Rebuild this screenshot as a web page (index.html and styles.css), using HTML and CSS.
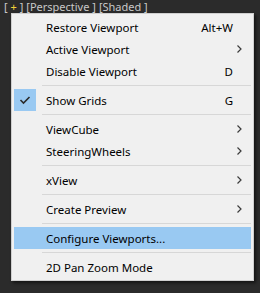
FILE: index.html
```html
<!DOCTYPE html>
<html lang="en">
  <head>
    <meta charset="UTF-8">
    <title>Viewport Menu</title>
    <link rel="stylesheet" href="styles.css">
  </head>
  <body>
    <div class="labels">
      <span>[ <span class="plus">+</span> ]</span>
      <span>[Perspective ]</span>
      <span>[Shaded ]</span>
    </div>

    <div class="menu">
      <div class="item">
        <span class="check"></span>
        <span class="label">Restore Viewport</span>
        <span class="key">Alt+W</span>
        <span class="arrow"></span>
      </div>
      <div class="item">
        <span class="check"></span>
        <span class="label">Active Viewport</span>
        <span class="key"></span>
        <span class="arrow"><svg width="5" height="8" viewBox="0 0 5 8"><path d="M0.5 0.5 L4 4 L0.5 7.5" fill="none" stroke="#3c3c3c" stroke-width="1.2"/></svg></span>
      </div>
      <div class="item">
        <span class="check"></span>
        <span class="label">Disable Viewport</span>
        <span class="key">D</span>
        <span class="arrow"></span>
      </div>
      <div class="sep"></div>
      <div class="item">
        <span class="check on"><svg width="12" height="10" viewBox="0 0 12 10"><path d="M1.5 5 L4.5 8 L10.5 2" fill="none" stroke="#2b2b2b" stroke-width="1.6"/></svg></span>
        <span class="label">Show Grids</span>
        <span class="key">G</span>
        <span class="arrow"></span>
      </div>
      <div class="sep"></div>
      <div class="item">
        <span class="check"></span>
        <span class="label">ViewCube</span>
        <span class="key"></span>
        <span class="arrow"><svg width="5" height="8" viewBox="0 0 5 8"><path d="M0.5 0.5 L4 4 L0.5 7.5" fill="none" stroke="#3c3c3c" stroke-width="1.2"/></svg></span>
      </div>
      <div class="item">
        <span class="check"></span>
        <span class="label">SteeringWheels</span>
        <span class="key"></span>
        <span class="arrow"><svg width="5" height="8" viewBox="0 0 5 8"><path d="M0.5 0.5 L4 4 L0.5 7.5" fill="none" stroke="#3c3c3c" stroke-width="1.2"/></svg></span>
      </div>
      <div class="sep"></div>
      <div class="item">
        <span class="check"></span>
        <span class="label">xView</span>
        <span class="key"></span>
        <span class="arrow"><svg width="5" height="8" viewBox="0 0 5 8"><path d="M0.5 0.5 L4 4 L0.5 7.5" fill="none" stroke="#3c3c3c" stroke-width="1.2"/></svg></span>
      </div>
      <div class="sep"></div>
      <div class="item">
        <span class="check"></span>
        <span class="label">Create Preview</span>
        <span class="key"></span>
        <span class="arrow"><svg width="5" height="8" viewBox="0 0 5 8"><path d="M0.5 0.5 L4 4 L0.5 7.5" fill="none" stroke="#3c3c3c" stroke-width="1.2"/></svg></span>
      </div>
      <div class="sep"></div>
      <div class="item active">
        <span class="check"></span>
        <span class="label">Configure Viewports...</span>
        <span class="key"></span>
        <span class="arrow"></span>
      </div>
      <div class="sep"></div>
      <div class="item">
        <span class="check"></span>
        <span class="label">2D Pan Zoom Mode</span>
        <span class="key"></span>
        <span class="arrow"></span>
      </div>
    </div>
  </body>
</html>
```

FILE: styles.css
```css
body, html {
  margin: 0;
  padding: 0;
  height: 100%;
  width: 100%;
  background-color: #2b2b2b;
  font-family: 'Noto Sans', 'Open Sans', sans-serif;
  font-size: 11.5px;
  color: #000;
}

.labels {
  height: 12px;
  padding: 1px 0 0 4px;
  color: #c8c8c8;
  font-size: 11px;
  line-height: 12px;
  white-space: pre;
  display: flex;
  gap: 3px;
}

.plus {
  color: #f2d23a;
}

.menu {
  margin-left: 11px;
  width: 241px;
  padding: 2px 0;
  background-color: #f0f0f0;
  border: 1px solid #cfcfcf;
  box-shadow: 2px 2px 3px rgba(0, 0, 0, 0.55);
  display: flex;
  flex-direction: column;
}

.item {
  height: 22px;
  margin: 0 2px;
  display: grid;
  grid-template-columns: 22px 1fr auto 18px;
  align-items: center;
}

.item.active {
  background-color: #99c9f2;
}

.check {
  height: 22px;
  display: flex;
  align-items: center;
  justify-content: center;
}

.check.on {
  background-color: #99c9f2;
}

.label {
  margin-left: 10px;
}

.key {
  text-align: right;
}

.arrow {
  padding-left: 4px;
  display: flex;
  align-items: center;
}

.sep {
  height: 7px;
  margin: 0 2px 0 30px;
  display: flex;
  align-items: center;
}

.sep::before {
  content: "";
  display: block;
  width: 100%;
  height: 1px;
  background-color: #d7d7d7;
}
```
